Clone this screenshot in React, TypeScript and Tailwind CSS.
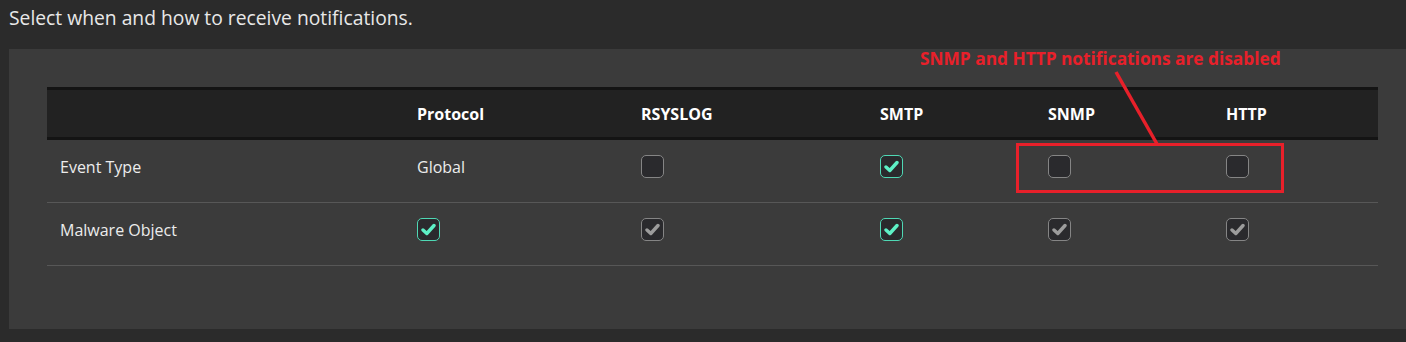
import React from "react";

type CbState = "off" | "on" | "disabled";

function Cb({ state }: { state: CbState }) {
  const border =
    state === "on" ? "border-[#4fd8b4]" : "border-[#858585]";
  return (
    <div
      className={`w-[23px] h-[23px] rounded-[5px] border bg-[#2a2a2d] flex items-center justify-center ${border}`}
    >
      {state !== "off" && (
        <svg width="15" height="13" viewBox="0 0 15 13">
          <path
            d="M2 7 L5.8 10.5 L13 2.5"
            fill="none"
            stroke={state === "on" ? "#5ef0c6" : "#9c9c9c"}
            strokeWidth="3.4"
            strokeLinecap="round"
            strokeLinejoin="round"
          />
        </svg>
      )}
    </div>
  );
}

const cols = "grid grid-cols-[357px_224px_239px_168px_178px_165px]";

export default function App() {
  const headers = ["", "Protocol", "RSYSLOG", "SMTP", "SNMP", "HTTP"];
  return (
    <div className="relative w-[1406px] h-[342px] bg-[#2b2b2b] font-['Open_Sans',sans-serif] overflow-hidden">
      <p className="h-[49px] pl-[9px] pt-[5px] text-[19.3px] leading-[26px] text-[#e8e8e8]">
        Select when and how to receive notifications.
      </p>
      <div className="ml-[9px] h-[280px] bg-[#3b3b3b] pt-[38px] pl-[38px]">
        <div className="w-[1331px]">
          <div
            className={`${cols} h-[53px] bg-[#222222] border-y-[3px] border-[#141414] items-center`}
          >
            {headers.map((h, i) => (
              <div
                key={i}
                className="pl-[13px] text-[16px] font-bold text-white leading-[22px]"
              >
                {h}
              </div>
            ))}
          </div>
          <div
            className={`${cols} h-[63px] border-b border-[#575757] pt-[15px] items-start`}
          >
            <div className="pl-[13px] text-[16px] leading-[24px] text-[#ececec]">
              Event Type
            </div>
            <div className="pl-[13px] text-[16px] leading-[24px] text-[#ececec]">
              Global
            </div>
            <div className="pl-[13px]">
              <Cb state="off" />
            </div>
            <div className="pl-[13px]">
              <Cb state="on" />
            </div>
            <div className="pl-[13px]">
              <Cb state="off" />
            </div>
            <div className="pl-[13px]">
              <Cb state="off" />
            </div>
          </div>
          <div
            className={`${cols} h-[63px] border-b border-[#575757] pt-[15px] items-start`}
          >
            <div className="pl-[13px] text-[16px] leading-[24px] text-[#ececec]">
              Malware Object
            </div>
            <div className="pl-[13px]">
              <Cb state="on" />
            </div>
            <div className="pl-[13px]">
              <Cb state="disabled" />
            </div>
            <div className="pl-[13px]">
              <Cb state="on" />
            </div>
            <div className="pl-[13px]">
              <Cb state="disabled" />
            </div>
            <div className="pl-[13px]">
              <Cb state="disabled" />
            </div>
          </div>
        </div>
      </div>

      {/* annotation overlay */}
      <div className="absolute left-[920px] top-[47px] text-[17.3px] leading-[24px] font-bold text-[#e8202a] whitespace-nowrap">
        SNMP and HTTP notifications are disabled
      </div>
      <svg
        className="absolute left-0 top-0 pointer-events-none"
        width="1406"
        height="342"
      >
        <line
          x1="1116"
          y1="72"
          x2="1157"
          y2="144"
          stroke="#e8202a"
          strokeWidth="3.5"
        />
        <rect
          x="1017.5"
          y="144.5"
          width="265"
          height="47"
          fill="none"
          stroke="#e8202a"
          strokeWidth="3"
        />
      </svg>
    </div>
  );
}
